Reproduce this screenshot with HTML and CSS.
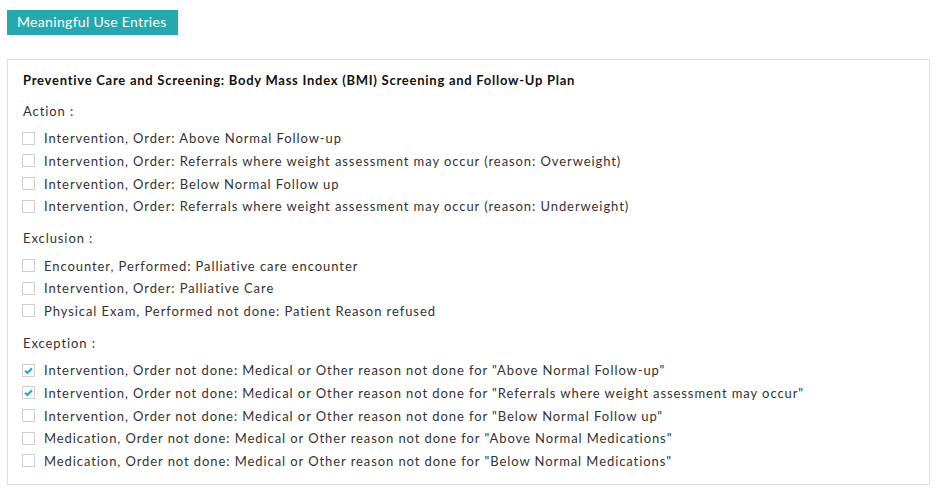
FILE: index.html
```html
<!DOCTYPE html>
<html>
<head>
<meta charset="utf-8">
<link rel="stylesheet" href="styles.css">
</head>
<body>
<div class="page">
  <div class="btn">Meaningful Use Entries</div>
  <div class="panel">
    <div class="title">Preventive Care and Screening: Body Mass Index (BMI) Screening and Follow-Up Plan</div>

    <div class="group">
      <div class="label">Action :</div>
      <div class="row"><span class="cb"></span><span class="txt">Intervention, Order: Above Normal Follow-up</span></div>
      <div class="row"><span class="cb"></span><span class="txt">Intervention, Order: Referrals where weight assessment may occur (reason: Overweight)</span></div>
      <div class="row"><span class="cb"></span><span class="txt">Intervention, Order: Below Normal Follow up</span></div>
      <div class="row"><span class="cb"></span><span class="txt">Intervention, Order: Referrals where weight assessment may occur (reason: Underweight)</span></div>
    </div>

    <div class="group">
      <div class="label">Exclusion :</div>
      <div class="row"><span class="cb"></span><span class="txt">Encounter, Performed: Palliative care encounter</span></div>
      <div class="row"><span class="cb"></span><span class="txt">Intervention, Order: Palliative Care</span></div>
      <div class="row"><span class="cb"></span><span class="txt">Physical Exam, Performed not done: Patient Reason refused</span></div>
    </div>

    <div class="group">
      <div class="label">Exception :</div>
      <div class="row"><span class="cb checked"><svg viewBox="0 0 13 13" width="13" height="13"><path d="M3 6.6 L5.4 9 L10 4.2" fill="none" stroke="#2aa8ae" stroke-width="2"/></svg></span><span class="txt">Intervention, Order not done: Medical or Other reason not done for "Above Normal Follow-up"</span></div>
      <div class="row"><span class="cb checked"><svg viewBox="0 0 13 13" width="13" height="13"><path d="M3 6.6 L5.4 9 L10 4.2" fill="none" stroke="#2aa8ae" stroke-width="2"/></svg></span><span class="txt">Intervention, Order not done: Medical or Other reason not done for "Referrals where weight assessment may occur"</span></div>
      <div class="row"><span class="cb"></span><span class="txt">Intervention, Order not done: Medical or Other reason not done for "Below Normal Follow up"</span></div>
      <div class="row"><span class="cb"></span><span class="txt">Medication, Order not done: Medical or Other reason not done for "Above Normal Medications"</span></div>
      <div class="row"><span class="cb"></span><span class="txt">Medication, Order not done: Medical or Other reason not done for "Below Normal Medications"</span></div>
    </div>
  </div>
</div>
</body>
</html>
```
FILE: styles.css
```css
html, body {
  margin: 0;
  padding: 0;
  background: #fff;
}
.page {
  padding: 10px 11px 0 7px;
  font-family: Lato, "Liberation Sans", sans-serif;
  color: #333;
}
.btn {
  display: inline-block;
  background: #26a9ae;
  color: #fff;
  font-size: 14px;
  letter-spacing: 0.32px;
  height: 25px;
  line-height: 24px;
  padding: 0 10px;
  width: 151px;
  box-sizing: content-box;
  white-space: nowrap;
}
.panel {
  margin-top: 24px;
  border: 1px solid #dedede;
  padding: 11px 14px 12px 14px;
}
.title {
  font-weight: bold;
  font-size: 13px;
  letter-spacing: 0.74px;
  line-height: 18px;
  color: #111;
  padding-left: 1px;
  margin-bottom: 12px;
}
.group + .group {
  margin-top: 10.67px;
}
.label {
  font-size: 13px;
  line-height: 20px;
  margin-bottom: 6px;
  padding-left: 1px;
  letter-spacing: 0.92px;
}
.row {
  display: flex;
  align-items: center;
  height: 22.67px;
}
.cb {
  width: 11px;
  height: 11px;
  border: 1px solid #cfcfcf;
  background: #fff;
  position: relative;
  flex: none;
  margin-right: 9px;
}
.cb svg {
  position: absolute;
  left: -1px;
  top: -1px;
}
.txt {
  font-size: 13px;
  letter-spacing: 0.92px;
  line-height: 18px;
  white-space: nowrap;
}
```
